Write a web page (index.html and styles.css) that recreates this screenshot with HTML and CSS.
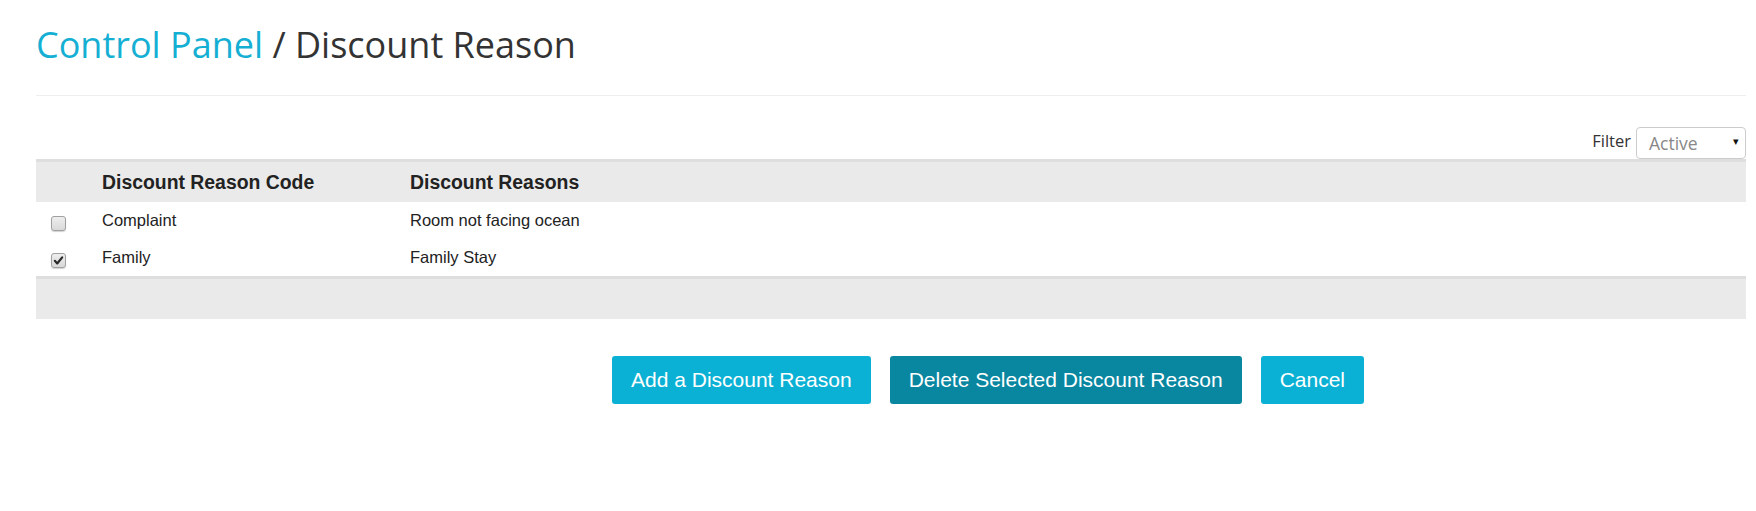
FILE: index.html
```html
<!DOCTYPE html>
<html>
<head>
<meta charset="utf-8">
<link rel="stylesheet" href="styles.css">
</head>
<body>
<div class="page">
  <h1 class="title"><span class="crumb">Control Panel</span> / Discount Reason</h1>
  <hr class="rule">
  <div class="filter-row">
    <label class="filter-label">Filter</label>
    <div class="select"><span>Active</span><span class="arrow">&#9662;</span></div>
  </div>
  <table class="grid">
    <thead>
      <tr><th class="c-check"></th><th class="c-code">Discount Reason Code</th><th>Discount Reasons</th></tr>
    </thead>
    <tbody>
      <tr><td class="c-check"><span class="cb"></span></td><td>Complaint</td><td>Room not facing ocean</td></tr>
      <tr><td class="c-check"><span class="cb checked"><svg viewBox="0 0 12 12" width="11" height="11"><path d="M2 6.4 L4.6 9.2 L10 2.6" fill="none" stroke="#2a2a2a" stroke-width="2.4" stroke-linecap="round" stroke-linejoin="round"/></svg></span></td><td>Family</td><td>Family Stay</td></tr>
    </tbody>
    <tfoot>
      <tr><td colspan="3"></td></tr>
    </tfoot>
  </table>
  <div class="actions">
    <button class="btn">Add a Discount Reason</button>
    <button class="btn dark">Delete Selected Discount Reason</button>
    <button class="btn">Cancel</button>
  </div>
</div>
</body>
</html>
```
FILE: styles.css
```css
html, body { margin: 0; padding: 0; background: #fff; }
body { font-family: "Liberation Sans", Arial, sans-serif; color: #333; }
.page { padding: 0 10px 0 36px; }
.title {
  margin: 20px 0 0 0;
  font-family: "Open Sans", sans-serif;
  font-weight: 400;
  font-size: 36px;
  line-height: 49px;
  color: #333;
}
.crumb { color: #16afd4; }
.rule { margin: 26px 0 0 0; border: 0; border-top: 1px solid #eee; height: 0; }
.filter-row {
  margin-top: 31px;
  display: flex;
  justify-content: flex-end;
  align-items: center;
  height: 32px;
}
.filter-label {
  font-family: "Open Sans", sans-serif;
  font-size: 16.5px;
  color: #333;
  margin-right: 5px;
  margin-top: -5px;
}
.select {
  box-sizing: border-box;
  width: 110px;
  height: 32px;
  border: 1px solid #ccc;
  border-radius: 4px;
  display: flex;
  align-items: center;
  justify-content: space-between;
  padding: 0 6px 0 12px;
  font-family: "Open Sans", sans-serif;
  font-size: 17.5px;
  color: #888;
  margin-top: -1px;
}
.select .arrow { font-size: 11px; color: #111; margin-top: -4px; }
.grid { width: 100%; border-collapse: collapse; }
.grid thead tr { background: #eaeaea; border-top: 3px solid #dedede; }
.grid th {
  height: 40px;
  text-align: left;
  font-weight: bold;
  font-size: 19.4px;
  padding: 0 8px;
  color: #222;
}
.grid td { height: 37px; font-size: 16.5px; padding: 0 8px; color: #222; }
.grid .c-check { width: 35px; padding-left: 15px; }
.grid .c-code { width: 292px; }
.grid tfoot tr { background: #eaeaea; border-top: 3px solid #dedede; }
.grid tfoot td { height: 40px; }
.cb {
  box-sizing: border-box;
  display: inline-flex;
  align-items: center;
  justify-content: center;
  width: 15px;
  height: 15px;
  border: 1px solid #a0a0a0;
  border-radius: 3px;
  background: linear-gradient(#eeeeee, #d9d9d9);
  box-shadow: 0 1px 1px rgba(0,0,0,0.18);
  vertical-align: middle;
  margin-top: 4px;
}
.actions {
  display: flex;
  gap: 19px;
  margin-top: 37px;
  padding-left: 576px;
}
.btn {
  height: 48px;
  padding: 0 19px;
  border: 0;
  border-radius: 3px;
  background: #0bb1d4;
  color: #fff;
  font-family: "Liberation Sans", Arial, sans-serif;
  font-size: 21px;
}
.btn.dark { background: #0986a0; }
```
